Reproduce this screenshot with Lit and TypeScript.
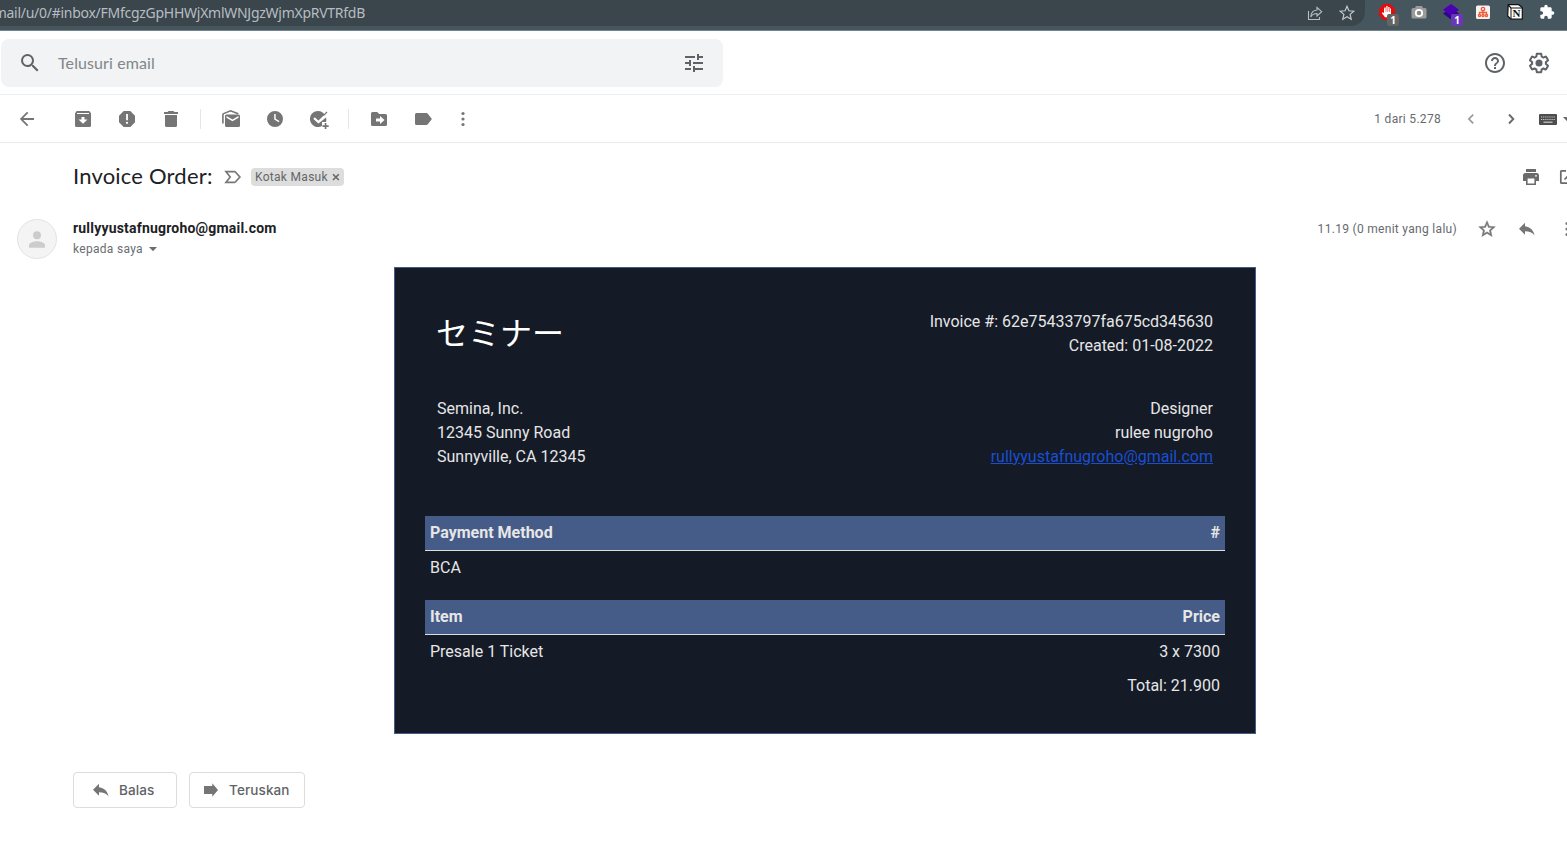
import { LitElement, html, css, svg, SVGTemplateResult } from "lit";
import { customElement } from "lit/decorators.js";

const icon = (body: SVGTemplateResult, cls = "", box = 20) =>
  html`<svg class="icon ${cls}" viewBox="0 0 ${box} ${box}" aria-hidden="true">${body}</svg>`;

const I = {
  back: svg`<path d="M17 9.100v1.800H6.300l5 5L10 17.200 2.900 10 10 2.800l1.300 1.300-5 5z"/>`,
  archive: svg`<path fill-rule="evenodd" d="M3.700 2h12.600L18 4.200v12.300a1.500 1.500 0 0 1-1.500 1.500h-13A1.500 1.500 0 0 1 2 16.500V4.200zM4 3.900v1.200h12V3.900zM8.500 8v2.500H5.500L10 14.700l4.500-4.200h-3V8z"/>`,
  spam: svg`<path fill-rule="evenodd" d="M6.700 2h6.600L18 6.700v6.600L13.300 18H6.700L2 13.300V6.700zM9.100 5v6.300h1.800V5zM10 12.700a1.150 1.150 0 1 0 0 2.300 1.150 1.150 0 0 0 0-2.300z"/>`,
  trash: svg`<path d="M7.500 2h5l1 1H17v2H3V3h3.500zM4 6h12v10.500a1.500 1.500 0 0 1-1.500 1.500h-9A1.500 1.500 0 0 1 4 16.500z"/>`,
  unread: svg`<path fill-rule="evenodd" d="M5.500 5.500h12A1.500 1.500 0 0 1 19 7v9.500a1.500 1.500 0 0 1-1.500 1.500h-12A1.500 1.500 0 0 1 4 16.500V7a1.500 1.500 0 0 1 1.500-1.500zM5.500 7v1.700l6 3.500 6-3.500V7l-6 3.500z"/><path d="M1.900 14.500V5.700Q1.900 5 2.600 4.600L9.500 1.800l7.800 3" fill="none" stroke="currentColor" stroke-width="1.600"/>`,
  clock: svg`<path fill-rule="evenodd" d="M10 2a8 8 0 1 0 0 16 8 8 0 0 0 0-16zM9.200 5h1.500v4.700l3.800 2.300-.8 1.300-4.500-2.800z"/>`,
  task: svg`<path d="M9 2a8 8 0 1 0 4 14.900V13.500h3.900A8 8 0 0 0 17 8.500l-7.500 6-5-4.500L6 8.500l3.500 3.200 6.300-5.800A8 8 0 0 0 9 2z"/><path d="M5 9l4.200 4 9.300-9.300" fill="none" stroke="#fff" stroke-width="1.600"/><path d="M14.500 6.700l3.500-3.700" stroke="currentColor" stroke-width="1.200"/><path d="M13 13h7v7h-7z" fill="#fff"/><path d="M15.700 14h1.700v2.200h2.300v1.700h-2.300V20h-1.700v-2.100h-2.300v-1.700h2.300z"/>`,
  move: svg`<path fill-rule="evenodd" d="M3.500 3h4.700l2 2h6.300A1.500 1.500 0 0 1 18 6.500v9a1.500 1.500 0 0 1-1.500 1.500h-13A1.500 1.500 0 0 1 2 15.500v-11A1.500 1.500 0 0 1 3.500 3zM11 7v2.500H7v3h4V15l4.500-4z"/>`,
  label: svg`<path d="M3.500 4h10q.8 0 1.300.7L18.900 10l-4.100 5.300q-.5.7-1.300.7h-10A1.500 1.500 0 0 1 2 14.500v-9A1.500 1.500 0 0 1 3.500 4z"/>`,
  more: svg`<circle cx="10" cy="4.500" r="1.600"/><circle cx="10" cy="10" r="1.600"/><circle cx="10" cy="15.500" r="1.600"/>`,
  prev: svg`<path d="M12.200 5.600L7.900 10l4.300 4.400" fill="none" stroke="currentColor" stroke-width="1.700"/>`,
  next: svg`<path d="M8 5.500l4.300 4.500L8 14.500" fill="none" stroke="currentColor" stroke-width="1.900"/>`,
  search: svg`<path d="M15.500 14h-.79l-.28-.27A6.471 6.471 0 0 0 16 9.500 6.500 6.500 0 1 0 9.500 16c1.610 0 3.090-.59 4.230-1.570l.27.28v.79l5 4.990L20.490 19l-4.990-5zm-6 0C7.010 14 5 11.990 5 9.500S7.010 5 9.500 5 14 7.010 14 9.500 11.990 14 9.500 14z"/>`,
  tune: svg`<path d="M3 17v2h6v-2H3zM3 5v2h10V5H3zm10 16v-2h8v-2h-8v-2h-2v6h2zM7 9v2H3v2h4v2h2V9H7zm14 4v-2H11v2h10zm-6-4h2V7h4V5h-4V3h-2v6z"/>`,
  help: svg`<path d="M11 18h2v-2h-2v2zm1-16C6.480 2 2 6.480 2 12s4.480 10 10 10 10-4.480 10-10S17.520 2 12 2zm0 18c-4.410 0-8-3.590-8-8s3.590-8 8-8 8 3.590 8 8-3.590 8-8 8zm0-14c-2.210 0-4 1.790-4 4h2c0-1.100.9-2 2-2s2 .9 2 2c0 2-3 1.750-3 5h2c0-2.250 3-2.500 3-5 0-2.210-1.790-4-4-4z"/>`,
  gear: svg`<path d="M13.850 22.250h-3.700c-.74 0-1.360-.54-1.450-1.270l-.27-1.890c-.27-.14-.53-.29-.79-.46l-1.800.72c-.7.26-1.470-.03-1.810-.65L2.200 15.530c-.35-.66-.2-1.440.36-1.880l1.530-1.190c-.01-.15-.02-.3-.02-.46 0-.15.01-.31.02-.46l-1.520-1.190c-.59-.45-.74-1.260-.37-1.880l1.850-3.190c.34-.62 1.110-.9 1.790-.63l1.810.73c.26-.17.52-.32.78-.46l.27-1.910c.09-.7.71-1.250 1.440-1.250h3.700c.74 0 1.360.54 1.450 1.270l.27 1.890c.27.14.53.29.79.46l1.800-.72c.71-.26 1.480.03 1.820.65l1.840 3.180c.36.66.2 1.440-.36 1.880l-1.520 1.190c.01.15.02.3.02.46s-.01.31-.02.46l1.520 1.190c.56.45.72 1.230.37 1.860l-1.860 3.220c-.34.62-1.110.9-1.800.63l-1.800-.72c-.26.17-.52.32-.78.46l-.27 1.910c-.1.680-.72 1.220-1.460 1.220zm-3.230-2h2.760l.37-2.550.53-.22c.44-.18.88-.44 1.340-.78l.45-.34 2.380.96 1.380-2.400-2.030-1.580.07-.56c.03-.26.06-.51.06-.78s-.03-.53-.06-.78l-.07-.56 2.030-1.580-1.390-2.400-2.390.96-.45-.35c-.42-.32-.87-.58-1.330-.77l-.52-.22-.37-2.550h-2.760l-.37 2.550-.53.210c-.44.190-.88.440-1.340.790l-.45.330-2.380-.95-1.390 2.390 2.030 1.580-.07.560a7 7 0 0 0-.06.790c0 .26.020.53.060.78l.07.56-2.030 1.580 1.380 2.400 2.390-.96.450.350c.43.330.86.580 1.330.770l.53.220.38 2.550z"/><circle cx="12" cy="12" r="3.500"/>`,
  important: svg`<path d="M3 4.700h8.700q.5 0 .9.500L16.900 10l-4.300 4.800q-.4.500-.9.500H3L7.200 10z" fill="none" stroke="currentColor" stroke-width="1.700"/>`,
  print: svg`<path fill-rule="evenodd" d="M5 2h10v3H5zM4.500 6h11A2.500 2.500 0 0 1 18 8.500V14h-3v4H5v-4H2V8.500A2.500 2.500 0 0 1 4.500 6zM6.600 11.500v4.900h6.800v-4.900zM15 7.900a.9.9 0 1 0 0 1.800.9.9 0 0 0 0-1.800z"/>`,
  open: svg`<path d="M9 3.800H4.600q-.8 0-.8.800v10.800q0 .8.800.8h11.600V11M12 3.500h4.500V8M16.500 3.500L7.500 12.500" fill="none" stroke="currentColor" stroke-width="1.700"/>`,
  star: svg`<path stroke="currentColor" stroke-width=".5" d="M22 9.240l-7.190-.62L12 2 9.190 8.630 2 9.240l5.460 4.730L5.820 21 12 17.270 18.180 21l-1.630-7.030L22 9.240zM12 15.400l-3.760 2.270 1-4.280-3.320-2.880 4.380-.38L12 6.100l1.710 4.040 4.380.38-3.320 2.880 1 4.280L12 15.400z"/>`,
  reply: svg`<path d="M8 7.300V3.800L2 9.800l6 6v-3.500c4.300 0 7.400 1.300 9.600 4.200-.9-4.200-3.400-8.400-9.600-9.200z"/>`,
  forward: svg`<path d="M3 6h8.300V3.300L17 10l-5.700 6.700V14H3z"/>`,
  caret: svg`<path d="M0 0h8L4 4.200z"/>`,
  keyboard: svg`<path d="M1 0h16a1 1 0 0 1 1 1v9a1 1 0 0 1-1 1H1a1 1 0 0 1-1-1V1a1 1 0 0 1 1-1z"/><path d="M2 3h14M2 5.500h14" stroke="#ccc" stroke-width="1.200" stroke-dasharray="1.200 .9"/><path d="M4.500 8.200h9" stroke="#ccc" stroke-width="1.200"/>`,
};

@customElement("browser-bar")
class BrowserBar extends LitElement {
  static styles = css`
    :host { display: flex; height: 30px; background: #46565f; border-bottom: 1px solid #74828b; font-family: "Noto Sans", "Open Sans", sans-serif; }
    .omni { width: 1365px; height: 26px; background: #3a454c; border-radius: 0 0 14px 0; display: flex; align-items: center; justify-content: space-between; flex: none; color: #b6bdc1; }
    .url { width: 365px; display: flex; justify-content: flex-end; font-size: 14px; line-height: 20px; white-space: nowrap; letter-spacing: -0.27px; padding-bottom: 1px; }
    .actions { display: flex; gap: 16px; padding-right: 10px; }
    svg { width: 16px; height: 16px; display: block; }
    .ext { display: flex; gap: 16px; padding: 4px 0 0 14px; height: 22px; }
    .slot { position: relative; width: 16px; height: 16px; }
    .badge { position: absolute; left: 8px; top: 10px; width: 12px; height: 12px; border-radius: 2px; color: #fff; font: bold 10px/12px "Noto Sans", sans-serif; text-align: center; }
    .grey { background: #646464; }
    .violet { background: #6938b8; }
    .n { font: bold 11px "Liberation Serif", serif; }
  `;
  render() {
    return html`
      <div class="omni">
        <div class="url">mail/u/0/#inbox/FMfcgzGpHHWjXmlWNJgzWjmXpRVTRfdB</div>
        <div class="actions">
          <svg viewBox="0 0 16 16" fill="none" stroke="#b6bdc1" stroke-width="1.100"><path d="M1.500 6v8.500h11V12"/><path d="M10 2.500L14.700 6.700 10 11V8.500C7 8.500 5 9.500 3.800 12 4 8 6 5.300 10 5z"/></svg>
          <svg viewBox="0 0 16 16" fill="none" stroke="#c3c9cc" stroke-width="1.200"><path d="M8 1.300l1.900 4.500 4.900.4-3.700 3.200 1.100 4.800L8 11.700l-4.200 2.500 1.100-4.800-3.700-3.200 4.900-.4z"/></svg>
        </div>
      </div>
      <div class="ext">
        <div class="slot"><svg viewBox="0 0 16 16"><path d="M4.700 0h6.600L16 4.700v6.600L11.300 16H4.700L0 11.300V4.700z" fill="#e40d0d"/><path d="M5 5.500V9L3.600 8.300l-.9.8L6 13.300h4.200L12 11V4.500h-1V8h-.5V3h-1.300v4.800h-.6V2H7.300v5.800h-.6V3.500H5.400z" fill="#fff"/></svg><span class="badge grey">1</span></div>
        <div class="slot"><svg viewBox="0 0 16 16"><path d="M5 2h6l1 2h2q1.500 0 1.500 1.500v7.500q0 1.500-1.500 1.500H2Q.500 14.500.500 13V5.500Q.500 4 2 4h2z" fill="#9b9b9b"/><circle cx="8" cy="9" r="3.200" fill="#888" stroke="#fff" stroke-width="1.800"/></svg></div>
        <div class="slot"><svg viewBox="0 0 16 16"><path d="M0 9.500L8 4l8 5.500L8 15.500z" fill="#2a0a7c"/><path d="M0 5.700L8 0l8 5.700L8 12z" fill="#4b00b4"/></svg><span class="badge violet">1</span></div>
        <div class="slot"><svg viewBox="0 0 16 16"><rect x="1" y="1.500" width="14" height="13.500" rx="1.500" fill="#f6f3f0"/><g fill="none" stroke="#ee5a38" stroke-width="1.300"><circle cx="8" cy="5" r="1.700"/><circle cx="4.500" cy="11.500" r="1.100"/><circle cx="8" cy="11.500" r="1.100"/><circle cx="11.500" cy="11.500" r="1.100"/><path d="M8 7v3.500M4.500 10.500V8.500h7v2"/></g></svg></div>
        <div class="slot"><svg viewBox="0 0 16 16"><path d="M1.200.700h10.500L15.300 3.500v11.700H4L.700 12z" fill="#fff" stroke="#111" stroke-width="1.200"/><path d="M1.200 1L4 4h11.300" fill="none" stroke="#111" stroke-width="1.200"/><path d="M4 4v11" stroke="#111"/><text class="n" x="5.500" y="13.200" fill="#111">N</text></svg></div>
        <div class="slot"><svg viewBox="0 0 24 24"><path fill="#fff" d="M20.500 11H19V7c0-1.100-.9-2-2-2h-4V3.500a2.500 2.500 0 0 0-5 0V5H4c-1.100 0-2 .9-2 2v3.800h1.500a2.700 2.700 0 0 1 0 5.400H2V20c0 1.100.9 2 2 2h3.800v-1.500a2.700 2.700 0 0 1 5.400 0V22H17c1.100 0 2-.9 2-2v-4h1.500a2.500 2.500 0 0 0 0-5z"/></svg></div>
      </div>`;
  }
}

@customElement("invoice-card")
class InvoiceCard extends LitElement {
  static styles = css`
    :host { display: block; box-sizing: border-box; width: 862px; height: 467px; padding: 30px; border: 1px solid #465c88; background: #141a26; color: #e6e6e6; font: 16px/24px Roboto, sans-serif; }
    .row { display: flex; justify-content: space-between; padding: 0 12px; }
    .top { padding-top: 12px; height: 87px; }
    .who { height: 119px; }
    .logo { font: 32px/42px "Noto Sans CJK JP", sans-serif; color: #fff; margin-left: -1px; }
    .right { text-align: right; }
    .link { color: #1a4fd0; text-decoration: underline; }
    .line { display: flex; justify-content: space-between; padding: 5px; }
    .head { background: #465c88; border-bottom: 1px solid #ddd; font-weight: 700; }
    .details { padding-bottom: 20px; }
  `;
  line(cls: string, a: string, b: string) {
    return html`<div class="line ${cls}"><span>${a}</span><span>${b}</span></div>`;
  }
  render() {
    return html`
      <div class="row top">
        <div class="logo">セミナー</div>
        <div class="right">Invoice #: 62e75433797fa675cd345630<br />Created: 01-08-2022</div>
      </div>
      <div class="row who">
        <div>Semina, Inc.<br />12345 Sunny Road<br />Sunnyville, CA 12345</div>
        <div class="right">Designer<br />rulee nugroho<br /><span class="link">rullyyustafnugroho@gmail.com</span></div>
      </div>
      ${this.line("head", "Payment Method", "#")} ${this.line("details", "BCA", "")}
      ${this.line("head", "Item", "Price")} ${this.line("", "Presale 1 Ticket", "3 x 7300")}
      ${this.line("", "", "Total: 21.900")}`;
  }
}

@customElement("app-root")
class AppRoot extends LitElement {
  static styles = css`
    :host { display: block; width: 1567px; height: 852px; overflow: hidden; background: #fff; font-family: Roboto, sans-serif; color: #5f6368; }
    .icon { width: 20px; height: 20px; fill: currentColor; flex: none; display: block; }
    .i24 { width: 24px; height: 24px; }
    .header { display: flex; align-items: center; height: 63px; border-bottom: 1px solid #eceff1; box-sizing: content-box; }
    .search { box-sizing: border-box; margin-left: 1px; width: 722px; height: 48px; background: #f1f3f4; border-radius: 8px; display: flex; align-items: center; padding: 0 17px 0 17px; color: #5f6368; }
    .ph { flex: 1; margin-left: 16px; font: 16px/24px Lato, sans-serif; letter-spacing: 0.1px; color: #80868b; padding-top: 1px; }
    .tools { margin-left: auto; display: flex; gap: 20px; padding-right: 16px; }
    .bar { display: flex; align-items: center; height: 47px; border-bottom: 1px solid #ececec; padding-left: 17px; color: #757575; }
    .group { display: flex; gap: 24px; }
    .back { margin-right: 36px; }
    .sep { width: 1px; height: 20px; background: #e6e6e6; margin: 0 20px 0 19px; }
    .overflow { margin-left: 20px; }
    .pager { margin-left: auto; margin-right: -4px; display: flex; align-items: center; font-size: 12px; letter-spacing: 0.3px; color: #666a6e; }
    .prev { margin-left: 20px; color: #999; }
    .next { margin-left: 20px; }
    .kb { width: 18px; height: 11px; margin: 2px 7px 0 18px; color: #4d4d4d; }
    .pager .caret { margin-left: -1px; }
    .caret { width: 8px; height: 4px; }
    .subject { display: flex; align-items: center; height: 20px; padding: 24px 0 0 73px; color: #777; }
    .title { width: 140px; font: 22px/28px Lato, sans-serif; letter-spacing: 0.2px; color: #202124; white-space: nowrap; padding-bottom: 2px; }
    .important { margin: 0 8px 0 10px; }
    .chip { box-sizing: border-box; width: 93px; height: 18px; border-radius: 4px; background: #ddd; color: #666; font-size: 12px; line-height: 18px; letter-spacing: 0.3px; padding-left: 4px; display: flex; align-items: center; white-space: nowrap; }
    .x { width: 8px; height: 8px; margin-left: 4px; }
    .side { margin-left: auto; display: flex; align-items: center; }
    .s1 { gap: 16px; margin-right: -10px; color: #6b6b6b; }
    .sender { display: flex; height: 46px; padding: 32px 0 0 17px; }
    .avatar { box-sizing: border-box; width: 40px; height: 40px; border-radius: 50%; border: 1px solid #e3e3e3; background: #f4f4f4; display: flex; align-items: center; justify-content: center; color: #ccc; flex: none; }
    .from { margin-left: 16px; }
    .addr { font-size: 14px; line-height: 18px; height: 20px; font-weight: 700; letter-spacing: 0.2px; color: #202124; }
    .to { display: flex; align-items: center; font-size: 12px; line-height: 20px; letter-spacing: 0.3px; color: #6a6e72; }
    .to .caret { margin-left: 6px; }
    .s2 { height: 20px; font-size: 12px; letter-spacing: 0.3px; color: #666a6e; margin-right: -10px; }
    .s2 .icon { color: #757575; margin-left: 20px; }
    .card { display: flex; margin-left: 394px; margin-top: 2px; }
    .actions { display: flex; gap: 12px; padding: 38px 0 0 73px; }
    .btn { box-sizing: border-box; height: 36px; border: 1px solid #dadce0; border-radius: 4px; display: flex; align-items: center; font: 500 13.5px/20px Inter, sans-serif; color: #5f6368; letter-spacing: 0.12px; white-space: nowrap; }
    .btn .icon { color: #757575; }
    .btn span { padding-bottom: 1px; }
    .b1 { width: 104px; padding-left: 17px; gap: 8px; }
    .b2 { width: 116px; padding-left: 11px; gap: 8px; }
  `;
  render() {
    return html`
      <browser-bar></browser-bar>
      <div class="header">
        <div class="search">${icon(I.search, "i24", 24)}<span class="ph">Telusuri email</span>${icon(I.tune, "i24", 24)}</div>
        <div class="tools">${icon(I.help, "i24", 24)}${icon(I.gear, "i24", 24)}</div>
      </div>
      <div class="bar">
        ${icon(I.back, "back")}
        <div class="group">${icon(I.archive)}${icon(I.spam)}${icon(I.trash)}</div>
        <div class="sep"></div>
        <div class="group">${icon(I.unread)}${icon(I.clock)}${icon(I.task)}</div>
        <div class="sep"></div>
        <div class="group">${icon(I.move)}${icon(I.label)}</div>
        ${icon(I.more, "overflow")}
        <div class="pager">
          <span>1 dari 5.278</span>${icon(I.prev, "prev")}${icon(I.next, "next")}
          <svg class="icon kb" viewBox="0 0 18 11">${I.keyboard}</svg>
          <svg class="icon caret" viewBox="0 0 8 4">${I.caret}</svg>
        </div>
      </div>
      <div class="subject">
        <div class="title">Invoice Order:</div>
        ${icon(I.important, "important")}
        <div class="chip">Kotak Masuk<svg class="x" viewBox="0 0 8 8"><path d="M1 1.200l5.800 5.800M6.800 1.200L1 7" stroke="#666" stroke-width="1.600"/></svg></div>
        <div class="side s1">${icon(I.print)}${icon(I.open)}</div>
      </div>
      <div class="sender">
        <div class="avatar"><svg class="icon i24" viewBox="0 0 24 24"><circle cx="12" cy="8.200" r="4"/><path d="M4 20.700v-2.500c0-2.700 5.300-4 8-4s8 1.300 8 4v2.500z"/></svg></div>
        <div class="from">
          <div class="addr">rullyyustafnugroho@gmail.com</div>
          <div class="to">kepada saya<svg class="icon caret" viewBox="0 0 8 4">${I.caret}</svg></div>
        </div>
        <div class="side s2"><span>11.19 (0 menit yang lalu)</span>${icon(I.star, "", 24)}${icon(I.reply)}${icon(I.more)}</div>
      </div>
      <div class="card"><invoice-card></invoice-card></div>
      <div class="actions">
        <div class="btn b1">${icon(I.reply)}<span>Balas</span></div>
        <div class="btn b2">${icon(I.forward)}<span>Teruskan</span></div>
      </div>`;
  }
}
